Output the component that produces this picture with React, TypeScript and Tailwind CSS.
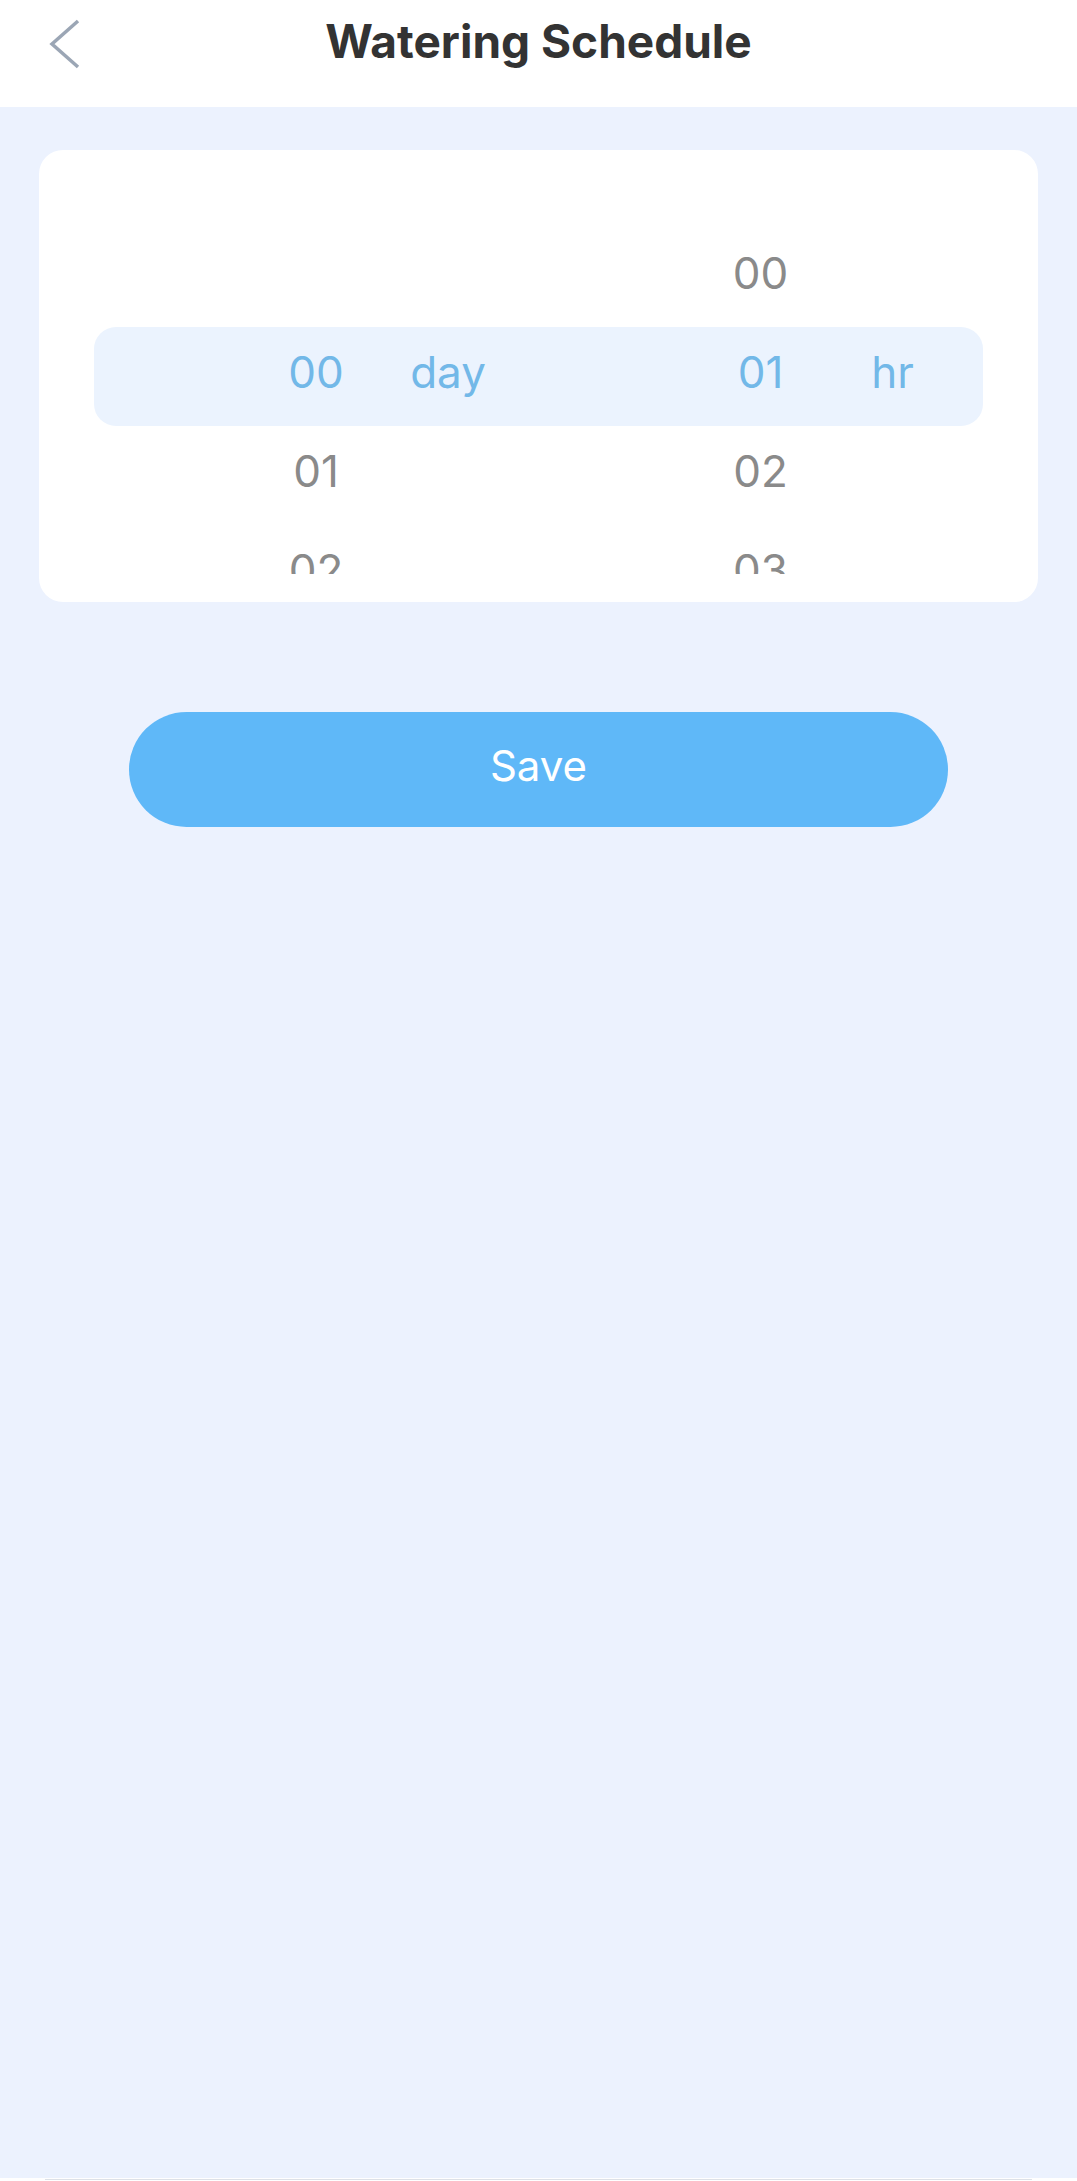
import React from "react"

const font = { fontFamily: "Inter, 'Noto Sans', sans-serif" }

function Cell({ value, unit, active }: { value: string; unit?: string; active?: boolean }) {
  return (
    <div className="flex flex-1 items-center">
      <div className="w-[172px]" />
      <div className={`w-[100px] text-center ${active ? "text-[#72b8e8]" : "text-[#8a8a8a]"}`}>{value}</div>
      <div className="w-[164px] text-center text-[#72b8e8]">{unit}</div>
    </div>
  )
}

function Row({ left, right, active }: { left: string; right: string; active?: boolean }) {
  return (
    <div className={`flex h-[99px] items-center pb-[10px] ${active ? "rounded-[22px] bg-[#ebf3fe]" : ""}`}>
      <Cell value={left} unit={active ? "day" : ""} active={active} />
      <Cell value={right} unit={active ? "hr" : ""} active={active} />
    </div>
  )
}

export default function App() {
  return (
    <div className="flex min-h-[2181px] flex-col bg-[#ecf2fe]" style={font}>
      <header className="h-[107px] bg-white">
        <div className="relative flex h-[82px] items-center justify-center">
          <button className="absolute left-[48px] top-[19px] p-0">
            <svg width="32" height="50" viewBox="0 0 32 50" fill="none">
              <path d="M30 2 L4 25 L30 48" stroke="#9ba6b5" strokeWidth="3.5" strokeLinejoin="miter" />
            </svg>
          </button>
          <h1 className="text-[46px] font-bold text-[#333333]">Watering Schedule</h1>
        </div>
      </header>

      <main className="flex flex-1 flex-col items-center px-[39px] pt-[43px]">
        <div className="w-full rounded-[24px] bg-white px-[55px] pt-[78px] pb-[28px] text-[44px]">
          <Row left="" right="00" />
          <Row left="00" right="01" active />
          <Row left="01" right="02" />
          <div className="h-[49px] overflow-hidden">
            <Row left="02" right="03" />
          </div>
        </div>

        <button className="mt-[110px] h-[115px] w-[819px] rounded-full bg-[#5fb8f8] pb-[8px] text-[42px] text-white">
          Save
        </button>
      </main>

      <div className="h-[3px] bg-white">
        <div className="mx-[45px] mt-px h-px bg-[#dde1e8]" />
      </div>
    </div>
  )
}
